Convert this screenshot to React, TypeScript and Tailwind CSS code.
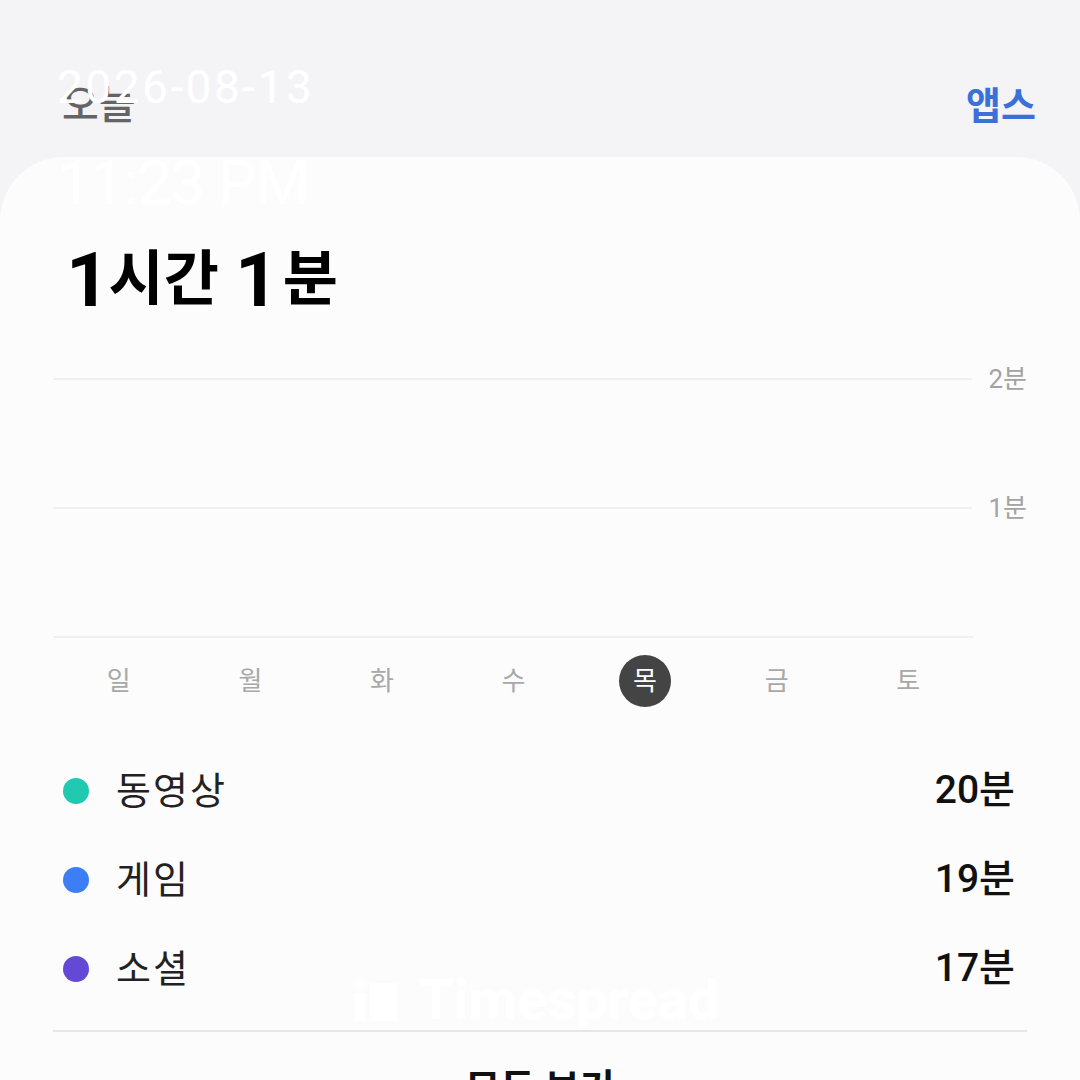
import React from "react";

const days = ["일", "월", "화", "수", "목", "금", "토"];
const legend = [
  { label: "동영상", value: "20분", color: "bg-[#20c9b0]" },
  { label: "게임", value: "19분", color: "bg-[#3d7ef7]" },
  { label: "소셜", value: "17분", color: "bg-[#6448d6]" },
];

export default function App() {
  return (
    <div
      className="relative w-[1080px] h-[1080px] overflow-hidden bg-[#f4f4f6]"
      style={{ fontFamily: 'Roboto, "Noto Sans CJK KR", sans-serif' }}
    >
      <header className="h-[157px] flex items-start justify-between pl-[62px] pr-[44px] pt-[82px]">
        <span className="text-[40px] leading-[48px] text-[#646464] font-medium">오늘</span>
        <span className="text-[38px] leading-[48px] text-[#3a70d8] font-bold">앱스</span>
      </header>

      <main className="h-[923px] bg-[#fcfcfc] rounded-t-[64px] px-[53px] pt-[78px]">
        <div className="h-[90px] flex items-end pl-[13px] leading-[90px] text-black font-bold">
          <span className="text-[76px] leading-[90px]">1</span>
          <span className="text-[60px] leading-[90px] -ml-[1px]">시간</span>
          <span className="text-[76px] leading-[90px] ml-[16px]">1</span>
          <span className="text-[60px] leading-[90px] ml-[4px]">분</span>
        </div>

        <div className="mt-[39px] flex flex-col gap-[99px]">
          {["2분", "1분", ""].map((l, i) => (
            <div key={i} className="h-[30px] flex items-center">
              <div className="w-[920px] h-[2px] bg-[#f0f0f0]" />
              <span className="pl-[16px] text-[26px] leading-[30px] text-[#a3a3a3]">{l}</span>
            </div>
          ))}
        </div>

        <div className="mt-[3px] w-[921px] h-[52px] grid grid-cols-7">
          {days.map((d) => (
            <div key={d} className="flex items-center justify-center">
              {d === "목" ? (
                <div className="w-[52px] h-[52px] rounded-full bg-[#444444] flex items-center justify-center text-white text-[26px] leading-none">
                  {d}
                </div>
              ) : (
                <span className="text-[26px] leading-none text-[#a8a8a8]">{d}</span>
              )}
            </div>
          ))}
        </div>

        <div className="mt-[39px] flex flex-col">
          {legend.map((item) => (
            <div key={item.label} className="h-[89px] flex items-center pl-[10px] pr-[12px]">
              <span className={`w-[26px] h-[26px] rounded-full ${item.color}`} />
              <span className="ml-[27px] text-[38px] leading-none text-[#222222] tracking-[2px]">{item.label}</span>
              <span className="ml-auto text-[39px] leading-none text-[#111111] font-medium">{item.value}</span>
            </div>
          ))}
        </div>

        <div className="mt-[17px] h-[2px] bg-[#e6e6e6]" />

        <div className="mt-[32px] text-center text-[38px] leading-[48px] font-bold text-[#111111]">모두 보기</div>
      </main>

      <div
        className="absolute left-[57px] top-[64px] text-[46px] leading-[46px] text-white tracking-[2.5px]"
        style={{ fontFamily: 'Roboto, sans-serif' }}
      >
        2026-08-13
      </div>
      <div
        className="absolute left-[57px] top-[152px] text-[62px] leading-[62px] text-white tracking-[-1.5px]"
        style={{ fontFamily: 'Roboto, sans-serif' }}
      >
        11:23 PM
      </div>

      <div className="absolute left-[355px] top-[972px] flex items-center gap-[22px] text-white">
        <svg width="42" height="42" viewBox="0 0 42 42">
          <rect x="0" y="0" width="10" height="10" rx="5" fill="#ffffff" />
          <rect x="0" y="14" width="10" height="28" fill="#ffffff" />
          <rect x="15" y="4" width="27" height="38" fill="#ffffff" />
        </svg>
        <span className="text-[56px] leading-[56px] font-bold" style={{ fontFamily: 'Roboto, sans-serif' }}>
          Timespread
        </span>
      </div>
    </div>
  );
}
